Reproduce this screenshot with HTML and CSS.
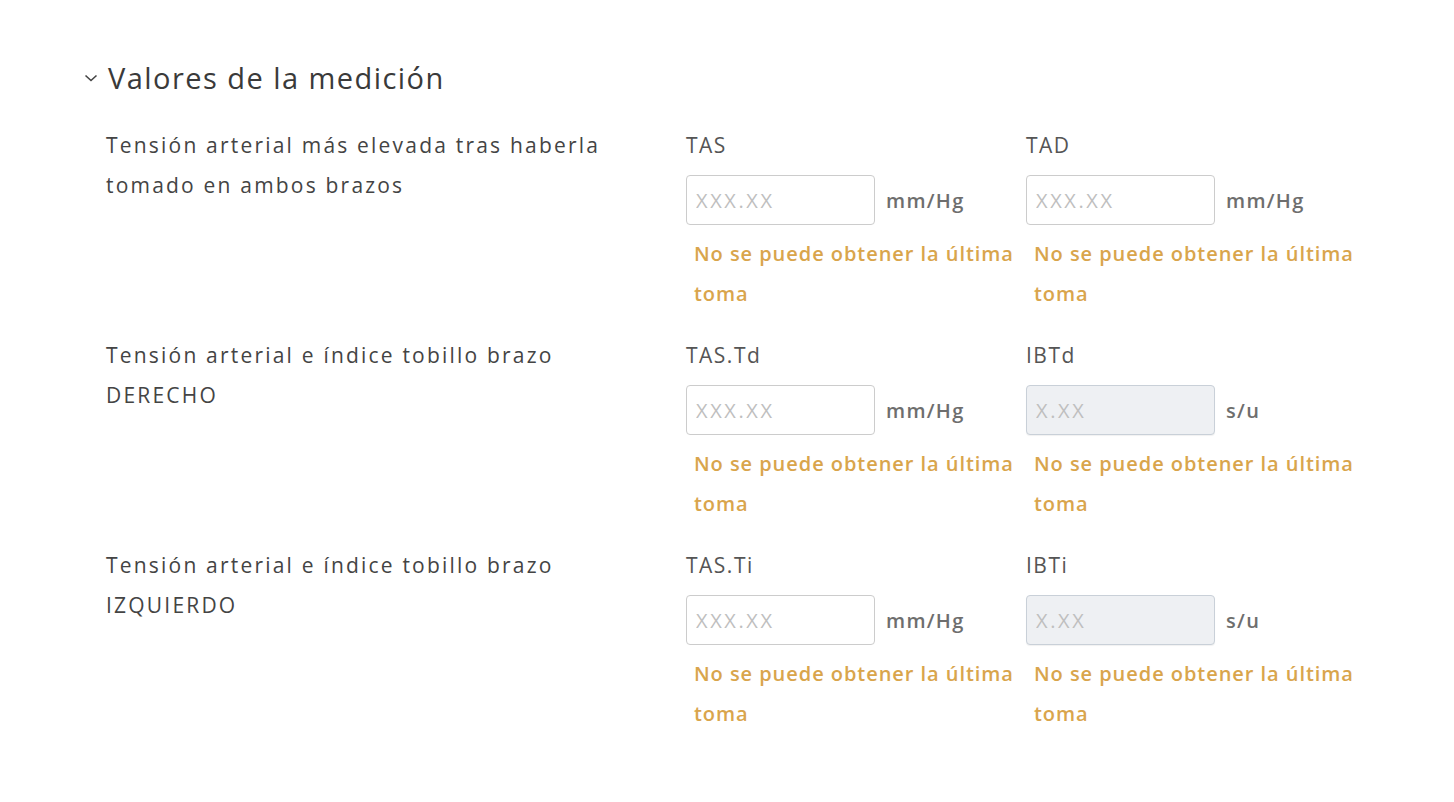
FILE: index.html
```html
<!DOCTYPE html>
<html lang="es">
<head>
<meta charset="utf-8">
<title>Valores de la medición</title>
<link rel="stylesheet" href="styles.css">
</head>
<body>
<section class="section">
  <h2 class="section-title">
    <svg class="chevron" width="14" height="10" viewBox="0 0 14 10"><path d="M1.5 2.5 L7 7.5 L12.5 2.5" fill="none" stroke="#444" stroke-width="1.6"/></svg>
    <span>Valores de la medición</span>
  </h2>
  <div class="rows">
    <div class="row">
      <div class="row-label">Tensión arterial más elevada tras haberla tomado en ambos brazos</div>
      <div class="field">
        <div class="field-label">TAS</div>
        <div class="field-input"><input class="input" placeholder="XXX.XX"><span class="unit">mm/Hg</span></div>
        <div class="warn">No se puede obtener la última toma</div>
      </div>
      <div class="field">
        <div class="field-label">TAD</div>
        <div class="field-input"><input class="input" placeholder="XXX.XX"><span class="unit">mm/Hg</span></div>
        <div class="warn">No se puede obtener la última toma</div>
      </div>
    </div>
    <div class="row">
      <div class="row-label">Tensión arterial e índice tobillo brazo DERECHO</div>
      <div class="field">
        <div class="field-label">TAS.Td</div>
        <div class="field-input"><input class="input" placeholder="XXX.XX"><span class="unit">mm/Hg</span></div>
        <div class="warn">No se puede obtener la última toma</div>
      </div>
      <div class="field">
        <div class="field-label">IBTd</div>
        <div class="field-input"><input class="input input-disabled" placeholder="X.XX" disabled><span class="unit">s/u</span></div>
        <div class="warn">No se puede obtener la última toma</div>
      </div>
    </div>
    <div class="row">
      <div class="row-label">Tensión arterial e índice tobillo brazo IZQUIERDO</div>
      <div class="field">
        <div class="field-label">TAS.Ti</div>
        <div class="field-input"><input class="input" placeholder="XXX.XX"><span class="unit">mm/Hg</span></div>
        <div class="warn">No se puede obtener la última toma</div>
      </div>
      <div class="field">
        <div class="field-label">IBTi</div>
        <div class="field-input"><input class="input input-disabled" placeholder="X.XX" disabled><span class="unit">s/u</span></div>
        <div class="warn">No se puede obtener la última toma</div>
      </div>
    </div>
  </div>
</section>
</body>
</html>
```
FILE: styles.css
```css
html, body {
  margin: 0;
  padding: 0;
  background: #ffffff;
}
body {
  font-family: "Open Sans", "Noto Sans", sans-serif;
  color: #444;
}
.section {
  padding: 56px 0 0 84px;
}
.section-title {
  margin: 0;
  display: flex;
  align-items: center;
  gap: 10px;
  height: 42px;
  font-size: 29px;
  font-weight: 400;
  color: #3a3a3a;
  letter-spacing: 1.45px;
}
.chevron {
  display: block;
  margin-top: 2px;
}
.rows {
  padding: 27px 0 0 22px;
  display: flex;
  flex-direction: column;
}
.row {
  display: grid;
  grid-template-columns: 580px 340px 340px;
  height: 210px;
}
.row-label {
  font-size: 21px;
  line-height: 40px;
  width: 520px;
  color: #444;
  letter-spacing: 2.2px;
}
.field {
  display: flex;
  flex-direction: column;
}
.field-label {
  font-size: 21px;
  line-height: 40px;
  color: #555;
  letter-spacing: 1.5px;
}
.field-input {
  margin-top: 10px;
  display: flex;
  align-items: center;
  gap: 11px;
}
.input {
  box-sizing: border-box;
  width: 189px;
  height: 50px;
  border: 1px solid #cccccc;
  border-radius: 4px;
  padding: 0 9px;
  font-family: inherit;
  font-size: 20px;
  letter-spacing: 2.6px;
  color: #444;
  background: #fff;
  outline: none;
}
.input::placeholder {
  color: #bfbfbf;
}
.input-disabled {
  background: #eef0f3;
  border-color: #c9d0d8;
  box-shadow: 0 1px 1px rgba(0, 0, 0, 0.06);
}
.unit {
  font-size: 20px;
  font-weight: 600;
  color: #6e6e6e;
  letter-spacing: 1.3px;
}
.warn {
  margin-top: 9px;
  padding-left: 8px;
  width: 330px;
  font-size: 20px;
  font-weight: 600;
  line-height: 40px;
  color: #d9a54c;
  letter-spacing: 0.95px;
}
```
